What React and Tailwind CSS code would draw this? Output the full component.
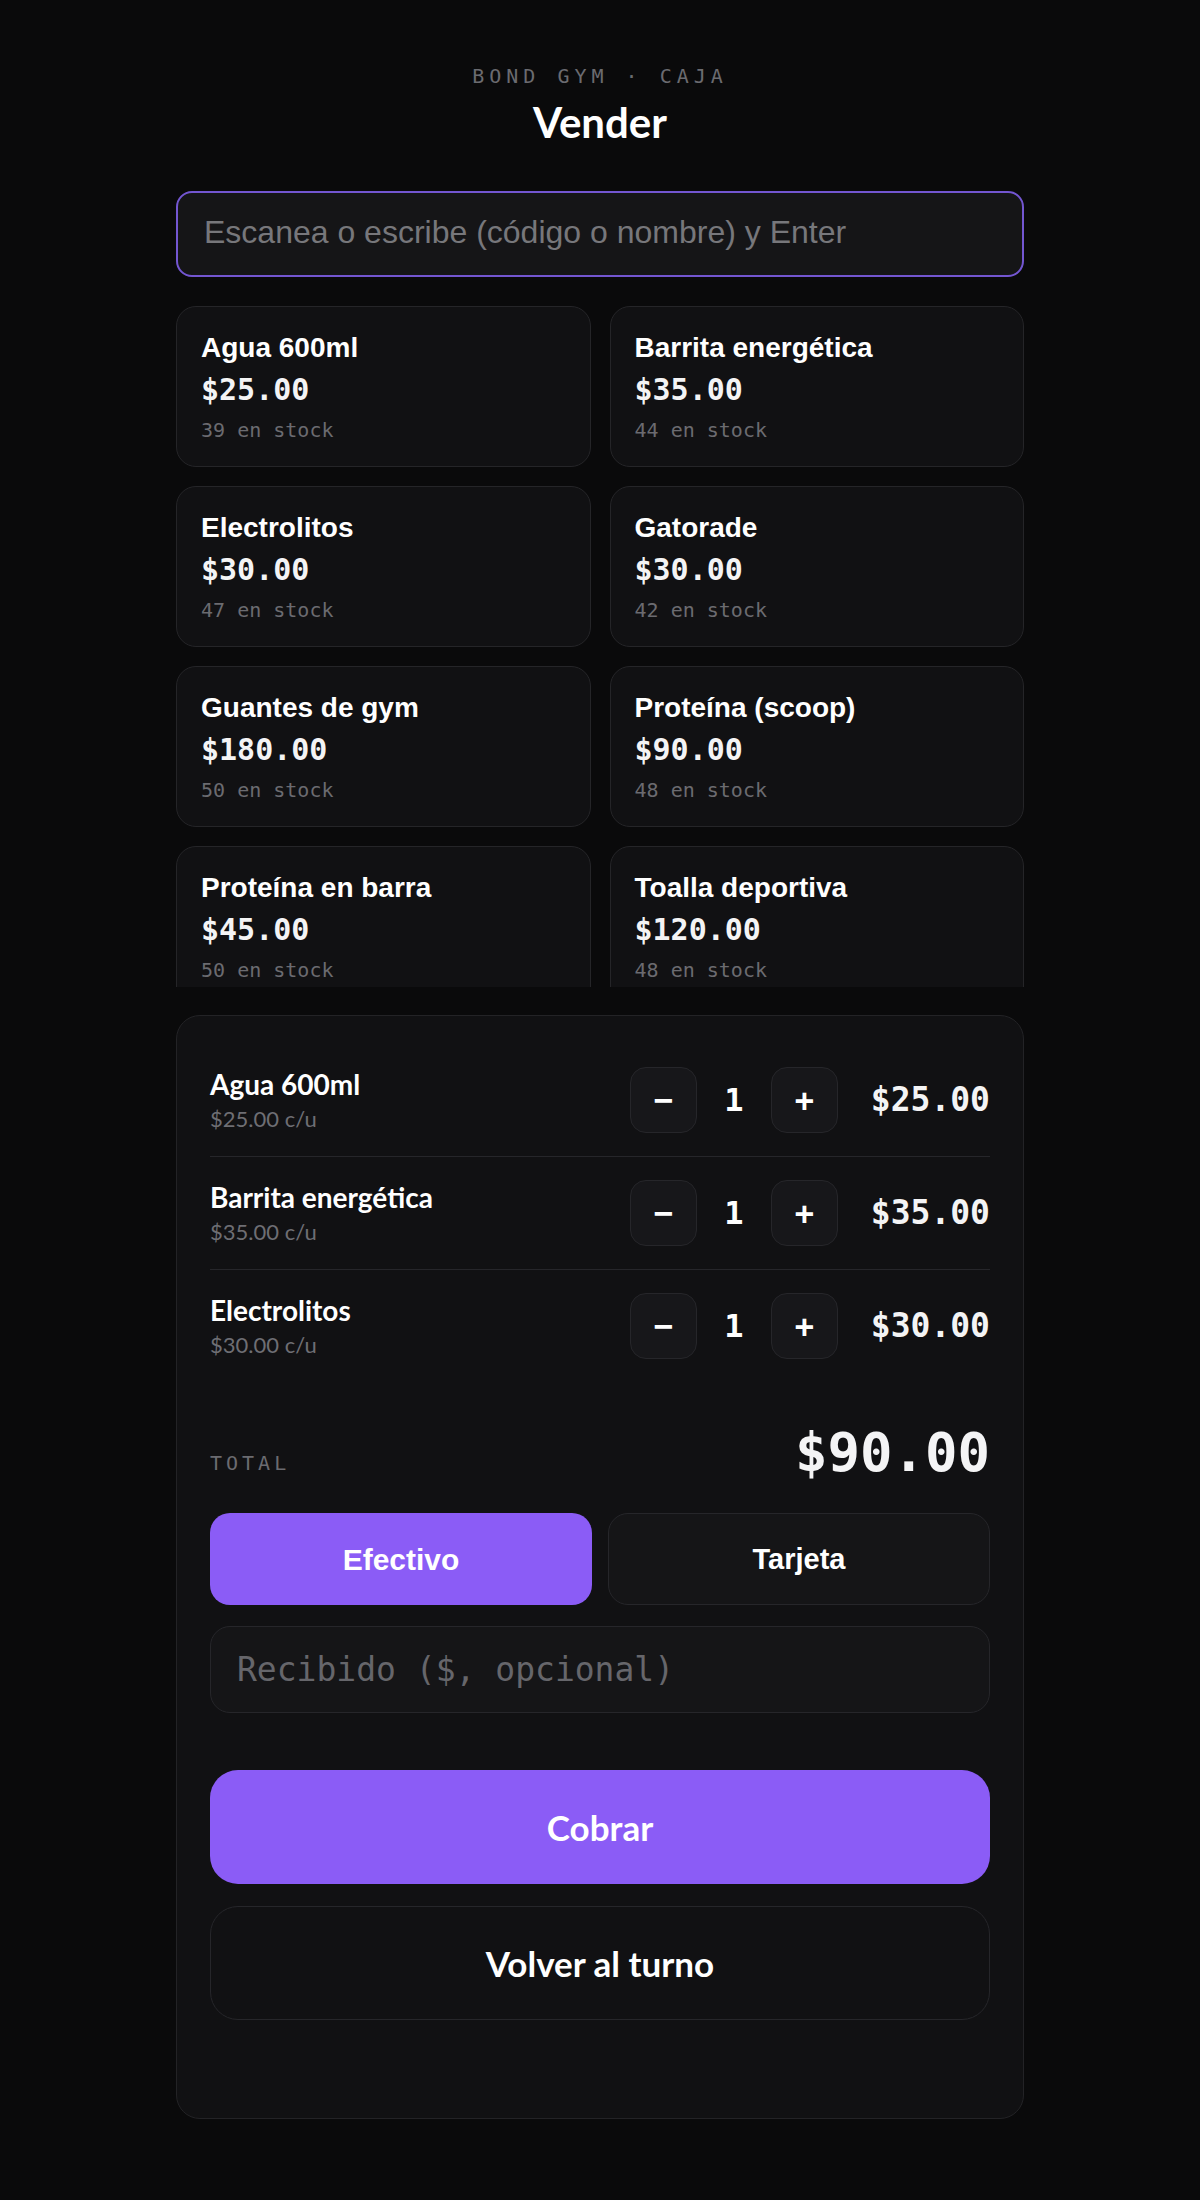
const PRODUCTS = [
  { name: "Agua 600ml", price: 25, stock: 39 },
  { name: "Barrita energética", price: 35, stock: 44 },
  { name: "Electrolitos", price: 30, stock: 47 },
  { name: "Gatorade", price: 30, stock: 42 },
  { name: "Guantes de gym", price: 180, stock: 50 },
  { name: "Proteína (scoop)", price: 90, stock: 48 },
  { name: "Proteína en barra", price: 45, stock: 50 },
  { name: "Toalla deportiva", price: 120, stock: 48 },
];

const CART = [
  { name: "Agua 600ml", price: 25, qty: 1 },
  { name: "Barrita energética", price: 35, qty: 1 },
  { name: "Electrolitos", price: 30, qty: 1 },
];

const money = (n) => `$${n.toFixed(2)}`;

function ProductCard({ p }) {
  return (
    <div className="rounded-[20px] border border-[#252528] bg-[#111113] p-6">
      <p className="font-['Liberation_Sans',Arial,sans-serif] text-[28px] font-bold leading-[1.2] text-white">
        {p.name}
      </p>
      <p className="mt-2 font-['DejaVu_Sans_Mono',monospace] text-[30px] font-bold leading-[1.15] text-[#f4f4f5]">
        {money(p.price)}
      </p>
      <p className="mt-[11px] font-['DejaVu_Sans_Mono',monospace] text-[20px] leading-[1.2] text-[#6b6b70]">
        {p.stock} en stock
      </p>
    </div>
  );
}

function QtyButton({ children }) {
  return (
    <button
      type="button"
      className="flex h-[66px] w-[67px] items-center justify-center rounded-[16px] border border-[#26262a] bg-[#17171a] font-['DejaVu_Sans_Mono',monospace] text-[32px] font-bold text-white"
    >
      {children}
    </button>
  );
}

function CartRow({ item, last }) {
  return (
    <div className={`flex items-center py-[23px] ${last ? "" : "border-b border-[#26262a]"}`}>
      <div className="flex-1">
        <p className="font-['Lato',sans-serif] text-[28px] font-bold leading-[1.2] text-white">{item.name}</p>
        <p className="mt-1 font-['Lato',sans-serif] text-[22px] leading-[1.2] text-[#6e6e73]">
          {money(item.price)} c/u
        </p>
      </div>
      <div className="flex items-center">
        <QtyButton>−</QtyButton>
        <span className="w-[74px] text-center font-['DejaVu_Sans_Mono',monospace] text-[32px] font-bold text-white">
          {item.qty}
        </span>
        <QtyButton>+</QtyButton>
      </div>
      <span className="ml-[33px] min-w-[119px] text-right font-['DejaVu_Sans_Mono',monospace] text-[33px] font-bold text-[#f4f4f5]">
        {money(item.price * item.qty)}
      </span>
    </div>
  );
}

export default function App() {
  const total = CART.reduce((s, i) => s + i.price * i.qty, 0);

  return (
    <div className="min-h-[2200px] bg-[#0a0a0b] pb-[81px] pt-[62px]">
      <div className="mx-auto w-[848px]">
        <header className="text-center">
          <p className="font-['DejaVu_Sans_Mono',monospace] text-[20px] leading-[28px] tracking-[0.25em] text-[#6b6b70]">
            BOND GYM · CAJA
          </p>
          <h1 className="mt-2 font-['Lato',sans-serif] text-[42px] font-bold leading-[48px] text-white">Vender</h1>
        </header>

        <input
          type="text"
          placeholder="Escanea o escribe (código o nombre) y Enter"
          className="mt-[45px] h-[86px] w-full rounded-[16px] border-2 border-[#7356d1] bg-[#151517] px-[26px] pb-1 font-['Liberation_Sans',Arial,sans-serif] text-[32px] text-white outline-none placeholder:text-[#77777b]"
        />

        <div className="mt-[29px] h-[681px] overflow-hidden">
          <div className="grid grid-cols-2 gap-[19px]">
            {PRODUCTS.map((p) => (
              <ProductCard key={p.name} p={p} />
            ))}
          </div>
        </div>

        <section className="mt-[28px] rounded-[24px] border border-[#232326] bg-[#111113] px-[33px] pb-[98px] pt-[28px]">
          {CART.map((item, i) => (
            <CartRow key={item.name} item={item} last={i === CART.length - 1} />
          ))}

          <div className="mt-[41px] flex items-end justify-between">
            <span className="mb-[4px] font-['DejaVu_Sans_Mono',monospace] text-[20px] tracking-[0.2em] text-[#6b6b70]">
              TOTAL
            </span>
            <span className="font-['DejaVu_Sans_Mono',monospace] text-[54px] font-bold leading-[1.1] text-[#f4f4f5]">
              {money(total)}
            </span>
          </div>

          <div className="mt-[31px] grid grid-cols-2 gap-4">
            <button
              type="button"
              className="h-[92px] rounded-[20px] bg-[#8b5cf6] font-['Liberation_Sans',Arial,sans-serif] text-[30px] font-bold text-white"
            >
              Efectivo
            </button>
            <button
              type="button"
              className="h-[92px] rounded-[20px] border border-[#26262a] bg-[#151517] font-['Liberation_Sans',Arial,sans-serif] text-[29px] font-bold text-white"
            >
              Tarjeta
            </button>
          </div>

          <input
            type="text"
            placeholder="Recibido ($, opcional)"
            className="mt-[21px] h-[87px] w-full rounded-[20px] border border-[#26262a] bg-[#151517] px-[26px] font-['DejaVu_Sans_Mono',monospace] text-[33px] text-white outline-none placeholder:text-[#66666b]"
          />

          <button
            type="button"
            className="mt-[57px] h-[114px] w-full rounded-[28px] bg-[#8b5cf6] font-['Lato',sans-serif] text-[35px] font-bold text-white"
          >
            Cobrar
          </button>
          <button
            type="button"
            className="mt-[22px] h-[114px] w-full rounded-[28px] border border-[#26262a] bg-[#111113] font-['Lato',sans-serif] text-[35px] font-bold text-white"
          >
            Volver al turno
          </button>
        </section>
      </div>
    </div>
  );
}
